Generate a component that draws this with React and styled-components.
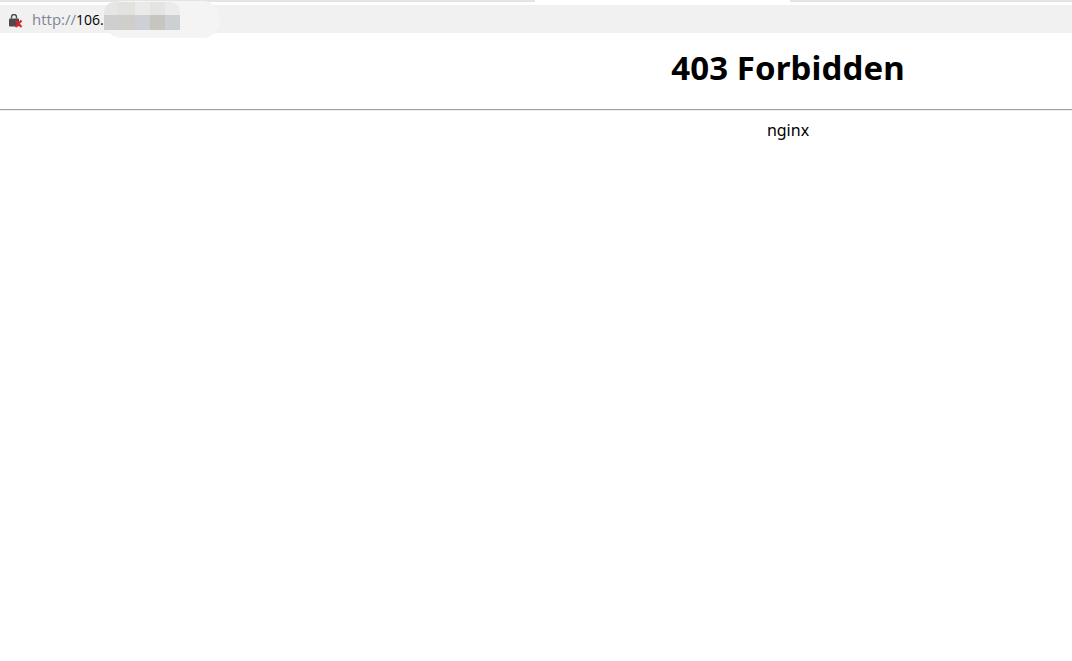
import React from 'react';
import styled, { createGlobalStyle } from 'styled-components';

const GlobalStyle = createGlobalStyle`
  html, body {
    margin: 0;
    background: white;
    overflow: hidden;
  }
`

const Page = styled.div`
  width: 1072px;
  height: 661px;
  font-family: 'Noto Sans', sans-serif;
  color: black;
  overflow: hidden;
`

const TabStrip = styled.div`
  display: flex;
  justify-content: space-between;
  height: 5px;
  background: white;
`

const TabEdge = styled.div`
  width: ${props => props.width}px;
  height: 2px;
  background: #e4e4e4;
`

const AddressBar = styled.div`
  position: relative;
  display: flex;
  align-items: center;
  height: 28px;
  padding-left: 8px;
  background: #f1f1f1;
`

const LockIcon = styled.svg`
  flex: none;
  width: 15px;
  height: 14px;
  margin-top: 4px;
`

const Url = styled.div`
  margin-left: 9px;
  font-family: 'Open Sans', sans-serif;
  font-size: 15px;
  color: #7d8796;

  > span {
    color: black;
    font-size: 14px;
  }
`

const Smear = styled.div`
  position: absolute;
  left: 104px;
  top: -4px;
  width: 116px;
  height: 37px;
  border-radius: 18px;
  background: #f4f4f4;
`

const Mosaic = styled.div`
  position: absolute;
  left: 104px;
  top: -3px;
  display: grid;
  grid-template-columns: 14px 17px 15px 15px 15px;
  grid-template-rows: 13px 15px;
  border-radius: 10px 10px 0 0;
  overflow: hidden;
`

const MosaicCell = styled.div`
  background: ${props => props.color};
`

const Content = styled.div`
  padding-left: 504px;
  text-align: center;
`

const Heading = styled.h1`
  margin: 0;
  padding-top: 13px;
  height: 63px;
  font-size: 33px;
  line-height: 44px;
  font-weight: 700;
  letter-spacing: 0.1px;
`

const Rule = styled.hr`
  margin: 0;
  border: 0;
  border-top: 1px solid #a0a0a0;
  border-bottom: 1px solid #eee;
  box-sizing: content-box;
  height: 0;
`

const Server = styled.div`
  padding-top: 8px;
  font-size: 16px;
  line-height: 22px;
`

const MOSAIC = [
  '#e6e6e4', '#e2e2df', '#eaeaea', '#e4e4e2', '#ebebeb',
  '#cfcfcf', '#cfcecb', '#cdd0d5', '#c6c5c0', '#cdd0d3',
]

const App = () => {
  return(
    <Page>
      <GlobalStyle />
      <TabStrip>
        <TabEdge width={535} />
        <TabEdge width={282} />
      </TabStrip>
      <AddressBar>
        <LockIcon viewBox="0 0 15 14">
          <path d="M3.5 4.5V3a2.5 2.5 0 0 1 5 0v1.5" fill="none" stroke="#4a4a4a" strokeWidth="1.4" />
          <rect x="1" y="4.5" width="10" height="8" rx="1" fill="#4a4a4a" />
          <path d="M7.5 6.5l6 6.5M13.5 6.5l-6 6.5" stroke="#d8232a" strokeWidth="2" />
        </LockIcon>
        <Url>http://<span>106.</span></Url>
        <Smear />
        <Mosaic>
          { MOSAIC.map((color, i) => <MosaicCell key={ i } color={ color } />) }
        </Mosaic>
      </AddressBar>
      <Content>
        <Heading>403 Forbidden</Heading>
      </Content>
      <Rule />
      <Content>
        <Server>nginx</Server>
      </Content>
    </Page>
  )
}

export default App
